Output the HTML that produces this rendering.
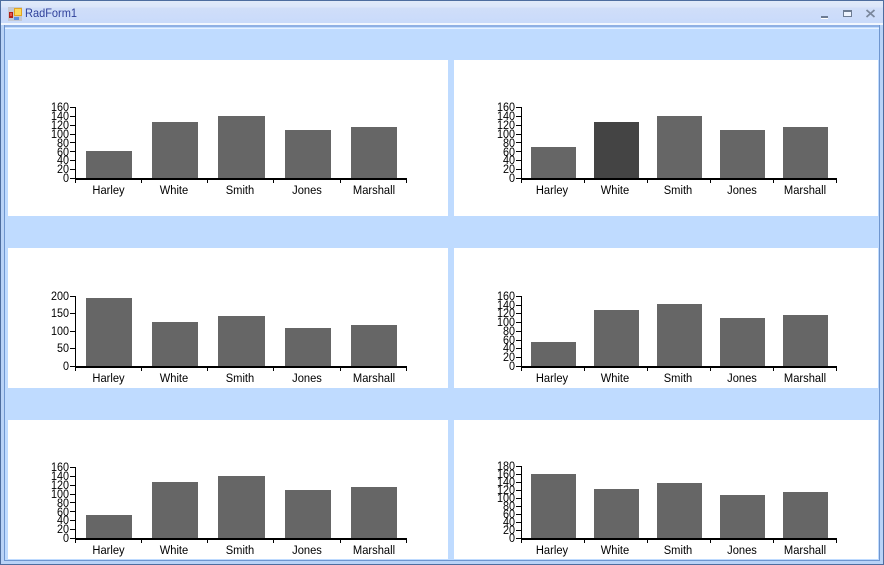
<!DOCTYPE html>
<html><head><meta charset="utf-8"><title>RadForm1</title>
<style>
html,body{margin:0;padding:0;background:#fff;width:884px;height:565px;overflow:hidden}
svg{display:block;position:absolute;left:0;top:0}
text{font-family:"Liberation Sans",sans-serif;font-size:12px;fill:#000;transform-box:fill-box}
.y{text-anchor:end;transform-origin:right center;transform:scaleX(.9)}
.x{text-anchor:middle;transform-origin:center;transform:scaleX(.93)}
.b{fill:#666}.a{fill:#000}
</style></head><body>
<svg width="884" height="565" viewBox="0 0 884 565" shape-rendering="crispEdges">
<defs><linearGradient id="t" x1="0" y1="0" x2="0" y2="1"><stop offset="0" stop-color="#e2ebf9"/><stop offset=".28" stop-color="#dbe6fa"/><stop offset=".32" stop-color="#d0def9"/><stop offset="1" stop-color="#c8dafa"/></linearGradient></defs>
<rect width="884" height="565" fill="#bfdbff"/>
<rect x="0" y="0" width="884" height="25" fill="url(#t)"/>
<rect x="0" y="0" width="884" height="1" fill="#4d6d9f"/>
<rect x="0" y="0" width="1" height="565" fill="#4d6d9f"/>
<rect x="883" y="0" width="1" height="565" fill="#4d6d9f"/>
<rect x="0" y="564" width="884" height="1" fill="#4d6d9f"/>
<rect x="1" y="23" width="882" height="2" fill="#f2f7fe"/>
<rect x="1" y="25" width="3" height="539" fill="#b9d3f7"/>
<rect x="880" y="25" width="3" height="539" fill="#b9d3f7"/>
<rect x="1" y="561" width="882" height="3" fill="#b9d3f7"/>
<rect x="4" y="25" width="876" height="2" fill="#8fb0e4"/>
<rect x="4" y="25" width="1" height="536" fill="#6f96cf"/>
<rect x="879" y="25" width="1" height="536" fill="#6f96cf"/>
<rect x="4" y="560" width="876" height="1" fill="#6f96cf"/>
<rect x="5" y="28" width="874" height="1" fill="#e8f2ff"/>
<rect x="8" y="60" width="440" height="156" fill="#fff"/>
<rect x="454" y="60" width="424" height="156" fill="#fff"/>
<rect x="8" y="248" width="440" height="140" fill="#fff"/>
<rect x="454" y="248" width="424" height="140" fill="#fff"/>
<rect x="8" y="420" width="440" height="139" fill="#fff"/>
<rect x="454" y="420" width="424" height="139" fill="#fff"/>

<!-- app icon -->
<rect x="8" y="7" width="14" height="14" fill="#c4c8d2"/>
<rect x="14" y="8" width="8" height="8" fill="#e3a520"/><rect x="15" y="9" width="6" height="6" fill="#fbd95c"/>
<rect x="9" y="12" width="4" height="6" fill="#b02018"/><rect x="10" y="13" width="2" height="3" fill="#e85a4a"/>
<rect x="14" y="17" width="5" height="3" fill="#5b90e0"/>
<text x="25" y="17" style="font-size:12px;fill:#2d3f9a" shape-rendering="auto" textLength="52" lengthAdjust="spacingAndGlyphs">RadForm1</text>
<!-- window controls -->
<rect x="821" y="16" width="7" height="2" fill="#6d7c93"/><rect x="821" y="18" width="7" height="1" fill="#fff"/>
<rect x="843" y="10" width="9" height="7" fill="#eef4fe"/><rect x="843" y="10" width="9" height="2" fill="#6d7c93"/>
<rect x="843" y="10" width="1" height="7" fill="#6d7c93"/><rect x="851" y="10" width="1" height="7" fill="#6d7c93"/><rect x="843" y="16" width="9" height="1" fill="#6d7c93"/>
<path d="M866.5 10l8 7M874.5 10l-8 7" stroke="#7a879c" stroke-width="1.8" fill="none" shape-rendering="auto"/>

<!-- chart 1 -->
<rect class="b" x="86" y="151" width="46" height="27"/><rect class="b" x="152" y="122" width="46" height="56"/><rect class="b" x="218" y="116" width="47" height="62"/><rect class="b" x="285" y="130" width="46" height="48"/><rect class="b" x="351" y="127" width="46" height="51"/>
<rect class="a" x="75" y="107" width="1" height="76"/><rect class="a" x="75" y="178" width="332" height="2"/>
<rect class="a" x="141" y="178" width="1" height="5"/><rect class="a" x="207" y="178" width="1" height="5"/><rect class="a" x="273" y="178" width="1" height="5"/><rect class="a" x="340" y="178" width="1" height="5"/><rect class="a" x="406" y="178" width="1" height="5"/>
<rect class="a" x="70" y="107" width="5" height="1"/><rect class="a" x="70" y="116" width="5" height="1"/><rect class="a" x="70" y="125" width="5" height="1"/><rect class="a" x="70" y="134" width="5" height="1"/><rect class="a" x="70" y="142" width="5" height="1"/><rect class="a" x="70" y="151" width="5" height="1"/><rect class="a" x="70" y="160" width="5" height="1"/><rect class="a" x="70" y="169" width="5" height="1"/><rect class="a" x="70" y="178" width="5" height="1"/>
<text class="y" x="69" y="111">160</text><text class="y" x="69" y="120">140</text><text class="y" x="69" y="129">120</text><text class="y" x="69" y="138">100</text><text class="y" x="69" y="147">80</text><text class="y" x="69" y="156">60</text><text class="y" x="69" y="164">40</text><text class="y" x="69" y="173">20</text><text class="y" x="69" y="182">0</text>
<text class="x" x="108.5" y="194">Harley</text><text class="x" x="174" y="194">White</text><text class="x" x="240" y="194">Smith</text><text class="x" x="307" y="194">Jones</text><text class="x" x="374" y="194">Marshall</text>

<!-- chart 2 -->
<rect class="b" x="531" y="147" width="45" height="31"/><rect x="594" y="122" width="45" height="56" fill="#444"/><rect class="b" x="657" y="116" width="45" height="62"/><rect class="b" x="720" y="130" width="45" height="48"/><rect class="b" x="783" y="127" width="45" height="51"/>
<rect class="a" x="521" y="107" width="1" height="76"/><rect class="a" x="521" y="178" width="316" height="2"/>
<rect class="a" x="584" y="178" width="1" height="5"/><rect class="a" x="647" y="178" width="1" height="5"/><rect class="a" x="710" y="178" width="1" height="5"/><rect class="a" x="773" y="178" width="1" height="5"/><rect class="a" x="836" y="178" width="1" height="5"/>
<rect class="a" x="516" y="107" width="5" height="1"/><rect class="a" x="516" y="116" width="5" height="1"/><rect class="a" x="516" y="125" width="5" height="1"/><rect class="a" x="516" y="134" width="5" height="1"/><rect class="a" x="516" y="142" width="5" height="1"/><rect class="a" x="516" y="151" width="5" height="1"/><rect class="a" x="516" y="160" width="5" height="1"/><rect class="a" x="516" y="169" width="5" height="1"/><rect class="a" x="516" y="178" width="5" height="1"/>
<text class="y" x="515" y="111">160</text><text class="y" x="515" y="120">140</text><text class="y" x="515" y="129">120</text><text class="y" x="515" y="138">100</text><text class="y" x="515" y="147">80</text><text class="y" x="515" y="156">60</text><text class="y" x="515" y="164">40</text><text class="y" x="515" y="173">20</text><text class="y" x="515" y="182">0</text>
<text class="x" x="552" y="194">Harley</text><text class="x" x="615" y="194">White</text><text class="x" x="678" y="194">Smith</text><text class="x" x="742" y="194">Jones</text><text class="x" x="805" y="194">Marshall</text>

<!-- chart 3 -->
<rect class="b" x="86" y="298" width="46" height="68"/><rect class="b" x="152" y="322" width="46" height="44"/><rect class="b" x="218" y="316" width="47" height="50"/><rect class="b" x="285" y="328" width="46" height="38"/><rect class="b" x="351" y="325" width="46" height="41"/>
<rect class="a" x="75" y="296" width="1" height="75"/><rect class="a" x="75" y="366" width="332" height="2"/>
<rect class="a" x="141" y="366" width="1" height="5"/><rect class="a" x="207" y="366" width="1" height="5"/><rect class="a" x="273" y="366" width="1" height="5"/><rect class="a" x="340" y="366" width="1" height="5"/><rect class="a" x="406" y="366" width="1" height="5"/>
<rect class="a" x="70" y="296" width="5" height="1"/><rect class="a" x="70" y="313" width="5" height="1"/><rect class="a" x="70" y="331" width="5" height="1"/><rect class="a" x="70" y="348" width="5" height="1"/><rect class="a" x="70" y="366" width="5" height="1"/>
<text class="y" x="69" y="300">200</text><text class="y" x="69" y="317">150</text><text class="y" x="69" y="335">100</text><text class="y" x="69" y="352">50</text><text class="y" x="69" y="370">0</text>
<text class="x" x="108.5" y="382">Harley</text><text class="x" x="174" y="382">White</text><text class="x" x="240" y="382">Smith</text><text class="x" x="307" y="382">Jones</text><text class="x" x="374" y="382">Marshall</text>

<!-- chart 4 -->
<rect class="b" x="531" y="342" width="45" height="24"/><rect class="b" x="594" y="310" width="45" height="56"/><rect class="b" x="657" y="304" width="45" height="62"/><rect class="b" x="720" y="318" width="45" height="48"/><rect class="b" x="783" y="315" width="45" height="51"/>
<rect class="a" x="521" y="296" width="1" height="75"/><rect class="a" x="521" y="366" width="316" height="2"/>
<rect class="a" x="584" y="366" width="1" height="5"/><rect class="a" x="647" y="366" width="1" height="5"/><rect class="a" x="710" y="366" width="1" height="5"/><rect class="a" x="773" y="366" width="1" height="5"/><rect class="a" x="836" y="366" width="1" height="5"/>
<rect class="a" x="516" y="296" width="5" height="1"/><rect class="a" x="516" y="305" width="5" height="1"/><rect class="a" x="516" y="313" width="5" height="1"/><rect class="a" x="516" y="322" width="5" height="1"/><rect class="a" x="516" y="331" width="5" height="1"/><rect class="a" x="516" y="340" width="5" height="1"/><rect class="a" x="516" y="348" width="5" height="1"/><rect class="a" x="516" y="357" width="5" height="1"/><rect class="a" x="516" y="366" width="5" height="1"/>
<text class="y" x="515" y="300">160</text><text class="y" x="515" y="309">140</text><text class="y" x="515" y="317">120</text><text class="y" x="515" y="326">100</text><text class="y" x="515" y="335">80</text><text class="y" x="515" y="344">60</text><text class="y" x="515" y="352">40</text><text class="y" x="515" y="361">20</text><text class="y" x="515" y="370">0</text>
<text class="x" x="552" y="382">Harley</text><text class="x" x="615" y="382">White</text><text class="x" x="678" y="382">Smith</text><text class="x" x="742" y="382">Jones</text><text class="x" x="805" y="382">Marshall</text>

<!-- chart 5 -->
<rect class="b" x="86" y="515" width="46" height="23"/><rect class="b" x="152" y="482" width="46" height="56"/><rect class="b" x="218" y="476" width="47" height="62"/><rect class="b" x="285" y="490" width="46" height="48"/><rect class="b" x="351" y="487" width="46" height="51"/>
<rect class="a" x="75" y="467" width="1" height="76"/><rect class="a" x="75" y="538" width="332" height="2"/>
<rect class="a" x="141" y="538" width="1" height="5"/><rect class="a" x="207" y="538" width="1" height="5"/><rect class="a" x="273" y="538" width="1" height="5"/><rect class="a" x="340" y="538" width="1" height="5"/><rect class="a" x="406" y="538" width="1" height="5"/>
<rect class="a" x="70" y="467" width="5" height="1"/><rect class="a" x="70" y="476" width="5" height="1"/><rect class="a" x="70" y="485" width="5" height="1"/><rect class="a" x="70" y="494" width="5" height="1"/><rect class="a" x="70" y="502" width="5" height="1"/><rect class="a" x="70" y="511" width="5" height="1"/><rect class="a" x="70" y="520" width="5" height="1"/><rect class="a" x="70" y="529" width="5" height="1"/><rect class="a" x="70" y="538" width="5" height="1"/>
<text class="y" x="69" y="471">160</text><text class="y" x="69" y="480">140</text><text class="y" x="69" y="489">120</text><text class="y" x="69" y="498">100</text><text class="y" x="69" y="507">80</text><text class="y" x="69" y="516">60</text><text class="y" x="69" y="524">40</text><text class="y" x="69" y="533">20</text><text class="y" x="69" y="542">0</text>
<text class="x" x="108.5" y="554">Harley</text><text class="x" x="174" y="554">White</text><text class="x" x="240" y="554">Smith</text><text class="x" x="307" y="554">Jones</text><text class="x" x="374" y="554">Marshall</text>

<!-- chart 6 -->
<rect class="b" x="531" y="474" width="45" height="64"/><rect class="b" x="594" y="489" width="45" height="49"/><rect class="b" x="657" y="483" width="45" height="55"/><rect class="b" x="720" y="495" width="45" height="43"/><rect class="b" x="783" y="492" width="45" height="46"/>
<rect class="a" x="521" y="466" width="1" height="77"/><rect class="a" x="521" y="538" width="316" height="2"/>
<rect class="a" x="584" y="538" width="1" height="5"/><rect class="a" x="647" y="538" width="1" height="5"/><rect class="a" x="710" y="538" width="1" height="5"/><rect class="a" x="773" y="538" width="1" height="5"/><rect class="a" x="836" y="538" width="1" height="5"/>
<rect class="a" x="516" y="466" width="5" height="1"/><rect class="a" x="516" y="474" width="5" height="1"/><rect class="a" x="516" y="482" width="5" height="1"/><rect class="a" x="516" y="490" width="5" height="1"/><rect class="a" x="516" y="498" width="5" height="1"/><rect class="a" x="516" y="506" width="5" height="1"/><rect class="a" x="516" y="514" width="5" height="1"/><rect class="a" x="516" y="522" width="5" height="1"/><rect class="a" x="516" y="530" width="5" height="1"/><rect class="a" x="516" y="538" width="5" height="1"/>
<text class="y" x="515" y="470">180</text><text class="y" x="515" y="478">160</text><text class="y" x="515" y="486">140</text><text class="y" x="515" y="494">120</text><text class="y" x="515" y="502">100</text><text class="y" x="515" y="510">80</text><text class="y" x="515" y="518">60</text><text class="y" x="515" y="526">40</text><text class="y" x="515" y="534">20</text><text class="y" x="515" y="542">0</text>
<text class="x" x="552" y="554">Harley</text><text class="x" x="615" y="554">White</text><text class="x" x="678" y="554">Smith</text><text class="x" x="742" y="554">Jones</text><text class="x" x="805" y="554">Marshall</text>
</svg>
</body></html>
